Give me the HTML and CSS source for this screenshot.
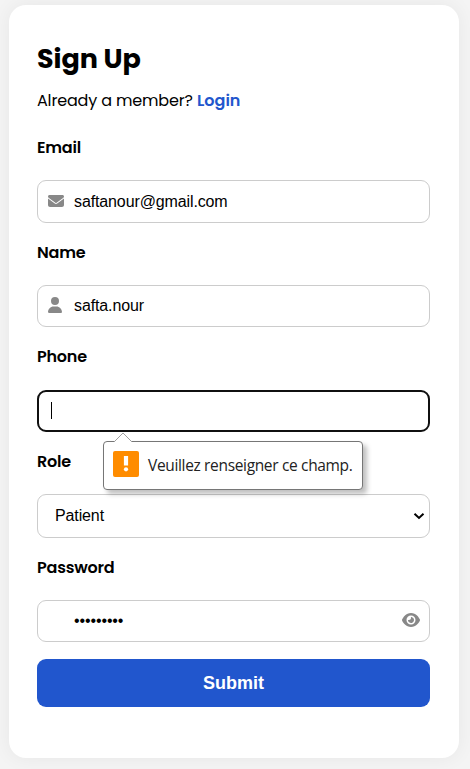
FILE: index.html
```html
<!DOCTYPE html>
<html lang="fr">
<head>
<meta charset="utf-8">
<title>Sign Up</title>
<link rel="stylesheet" href="styles.css">
</head>
<body>
<main class="card">
  <h1 class="title">Sign Up</h1>
  <p class="switch"><span class="switch-text">Already a member?</span><a class="login">Login</a></p>
  <form class="form">
    <div class="group">
      <label class="label l-email">Email</label>
      <div class="field tall">
        <svg class="icon" width="16" height="16" viewBox="0 0 512 512"><path d="M48 64C21.500 64 0 85.500 0 112c0 15.100 7.100 29.300 19.200 38.400L236.800 313.600c11.400 8.500 27 8.500 38.400 0L492.800 150.400c12.100-9.100 19.200-23.300 19.200-38.400c0-26.500-21.500-48-48-48H48zM0 176V384c0 35.300 28.700 64 64 64H448c35.300 0 64-28.700 64-64V176L294.400 339.200c-22.800 17.100-54 17.100-76.800 0L0 176z"/></svg>
        <span class="value">saftanour@gmail.com</span>
      </div>
    </div>
    <div class="group">
      <label class="label l-name">Name</label>
      <div class="field">
        <svg class="icon" width="14" height="16" viewBox="0 0 448 512"><path d="M224 256A128 128 0 1 0 224 0a128 128 0 1 0 0 256zm-45.700 48C79.800 304 0 383.800 0 482.300C0 498.700 13.300 512 29.700 512H418.300c16.400 0 29.700-13.300 29.700-29.700C448 383.800 368.200 304 269.700 304H178.300z"/></svg>
        <span class="value">safta.nour</span>
      </div>
    </div>
    <div class="group">
      <label class="label l-phone">Phone</label>
      <div class="field focused">
        <span class="caret"></span>
        <div class="tip">
          <svg class="tip-arrow" width="20" height="10" viewBox="0 0 20 10"><path d="M1 10L10 1L19 10" fill="#fff" stroke="#a0a0a0"/></svg>
          <svg width="26" height="26" viewBox="0 0 26 26"><rect width="26" height="26" rx="2" fill="#ff8c00"/><path d="M10.900 5h4.200v9.500h-4.200z" fill="#fff"/><circle cx="13" cy="18.300" r="2.100" fill="#fff"/></svg>
          <span class="tip-text">Veuillez renseigner ce champ.</span>
        </div>
      </div>
    </div>
    <div class="group">
      <label class="label l-role">Role</label>
      <div class="field select">
        <span class="value role">Patient</span>
        <svg class="chevron" width="12" height="8" viewBox="0 0 12 8"><path d="M1.500 1.700L6 5.900L10.500 1.700" fill="none" stroke="#000" stroke-width="2"/></svg>
      </div>
    </div>
    <div class="group">
      <label class="label l-password">Password</label>
      <div class="field">
        <span class="value secret">•••••••••</span>
        <svg class="eye" width="18" height="16" viewBox="0 0 576 512"><path d="M288 32c-80.800 0-145.500 36.800-192.600 80.600C48.600 156 17.300 208 2.500 243.700c-3.300 7.900-3.300 16.700 0 24.600C17.300 304 48.600 356 95.400 399.400C142.500 443.200 207.200 480 288 480s145.500-36.800 192.600-80.600c46.800-43.500 78.100-95.400 93-131.100c3.300-7.900 3.300-16.700 0-24.600c-14.900-35.700-46.200-87.700-93-131.100C433.500 68.800 368.800 32 288 32zM144 256a144 144 0 1 1 288 0 144 144 0 1 1-288 0zm144-64c0 35.300-28.700 64-64 64c-7.100 0-13.900-1.200-20.300-3.300c-5.500-1.800-11.900 1.600-11.700 7.400c.3 6.900 1.300 13.800 3.200 20.700c13.700 51.200 66.400 81.600 117.600 67.900s81.600-66.400 67.900-117.600c-11.100-41.500-47.800-69.400-88.600-71.100c-5.800-.2-9.200 6.100-7.400 11.700c2.100 6.400 3.300 13.200 3.300 20.300z"/></svg>
      </div>
    </div>
    <button class="submit" type="button">Submit</button>
  </form>
</main>
</body>
</html>
```
FILE: styles.css
```css
* { box-sizing: border-box; }
body {
  margin: 0;
  height: 769px;
  padding: 5px 11px 11px 9px;
  background: #f4f4f4;
  overflow: hidden;
  color: #000;
  font: 16px Poppins, Inter, sans-serif;
}
.card {
  height: 753px;
  padding: 33px 29px 0 28px;
  border-radius: 17px;
  background: #fff;
  box-shadow: 0 0 20px rgba(0, 0, 0, .06);
}
.title { margin: 0; font-size: 27px; line-height: 42px; font-weight: 700; letter-spacing: -.05px; }
.switch { display: flex; margin: 9px 0 0; line-height: 24px; }
.switch-text { width: 160px; white-space: nowrap; letter-spacing: -.17px; }
.login { color: #2256cd; font-weight: 600; }
.form { display: flex; flex-direction: column; margin-top: 14px; }
.label { display: block; height: 53px; padding-top: 9px; line-height: 24px; font-weight: 600; letter-spacing: -.22px; white-space: nowrap; }
.l-phone { padding-top: 8px; }
.group { margin-bottom: 9.250px; }
.field {
  position: relative;
  display: flex;
  align-items: center;
  height: 42px;
  padding: 0 10px 1px 10px;
  border: 1px solid #ccc;
  border-radius: 9px;
  font-family: "Liberation Sans", sans-serif;
}
.tall { height: 43px; padding-bottom: 0; }
.icon { margin-bottom: 2px; fill: #888; }
.value { letter-spacing: -.12px; }
.icon + .value { margin-left: 10px; }
.icon[width="14"] + .value { margin-left: 12px; }
.focused { border: 2px solid #101010; padding-left: 12px; }
.caret { width: 1px; height: 17px; background: #000; }
.select { height: 44px; padding: 0 4px 0 17px; justify-content: space-between; }
.secret { margin-left: 26px; }
.eye { margin: 0 -.5px 2px auto; fill: #888; }
.submit {
  height: 48px;
  margin-top: 7.500px;
  padding: 1px 0 0;
  border: 0;
  border-radius: 9px;
  background: #2156cd;
  color: #fff;
  font: bold 18px "Liberation Sans", sans-serif;
}
.tip {
  position: absolute;
  z-index: 2;
  left: 64px;
  top: 49px;
  display: flex;
  align-items: center;
  gap: 9px;
  width: 260px;
  height: 49px;
  padding: 0 9px 3px;
  border: 1px solid #767676;
  border-radius: 4px;
  background: #fff;
  box-shadow: 4px 4px 5px rgba(0, 0, 0, .25);
}
.tip-arrow { position: absolute; left: 9px; top: -10px; }
.tip-text { padding-top: 2px; color: #222; font: 15.500px "Open Sans", "Noto Sans", sans-serif; white-space: nowrap; letter-spacing: -.34px; }
```
